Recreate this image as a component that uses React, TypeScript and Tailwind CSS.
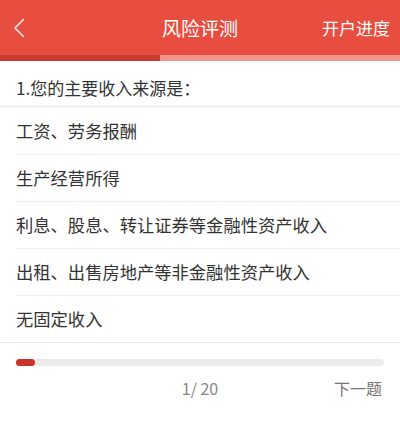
const OPTIONS = [
  "工资、劳务报酬",
  "生产经营所得",
  "利息、股息、转让证券等金融性资产收入",
  "出租、出售房地产等非金融性资产收入",
  "无固定收入",
];

const FONT = "font-['Noto_Sans_CJK_SC','Noto_Sans',sans-serif]";

export default function App() {
  return (
    <div className={`flex h-[432px] w-[400px] flex-col bg-white ${FONT}`}>
      {/* header */}
      <div className="flex h-[55px] items-center justify-between bg-[#e84e3f] text-white">
        <div className="flex w-[80px] items-center pl-[12px]">
          <svg width="14" height="22" viewBox="0 0 14 22" fill="none">
            <path d="M12 2 L3 11 L12 20" stroke="#fbe6e3" strokeWidth="1.6" />
          </svg>
        </div>
        <div className="text-[19px] leading-none">风险评测</div>
        <div className="w-[80px] pr-[10px] text-right text-[17px] leading-none">开户进度</div>
      </div>
      <div className="flex h-[6px]">
        <div className="w-[160px] bg-[#c93c30]" />
        <div className="flex-1 bg-[#f2938a]" />
      </div>

      {/* question */}
      <div className="px-[16px] pt-[14px] pb-[4px] text-[17px] leading-[26px] text-[#333]">
        1.您的主要收入来源是：
      </div>
      <div className="h-[3px] bg-[#f2f2f2]" />

      <ul>
        {OPTIONS.map((opt, i) => (
          <li key={opt} className={i === OPTIONS.length - 1 ? "border-b border-[#e8e8e8]" : "pl-[16px]"}>
            <div
              className={`flex h-[46px] items-center text-[17.3px] text-[#333] ${
                i === OPTIONS.length - 1 ? "pl-[16px]" : "border-b border-[#efefef] h-[47px]"
              }`}
            >
              {opt}
            </div>
          </li>
        ))}
      </ul>

      {/* progress */}
      <div className="px-[16px] pt-[16px]">
        <div className="h-[7px] rounded-full bg-[#ebebeb]">
          <div className="h-full w-[19px] rounded-full bg-[#c8332a]" />
        </div>
      </div>
      <div className="relative flex h-[44px] items-center justify-center">
        <span className="text-[16px] text-[#888]">1/ 20</span>
        <span className="absolute right-[18px] text-[16px] text-[#777]">下一题</span>
      </div>
    </div>
  );
}
